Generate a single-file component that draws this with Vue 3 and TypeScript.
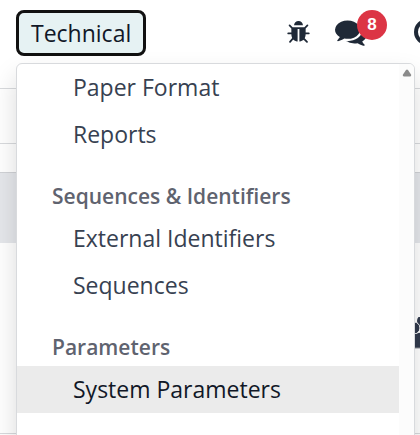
<script setup lang="ts">
interface MenuItem {
  label: string
  active?: boolean
}

interface MenuSection {
  title?: string
  items: MenuItem[]
}

const sections: MenuSection[] = [
  { items: [{ label: 'Paper Format' }, { label: 'Reports' }] },
  {
    title: 'Sequences & Identifiers',
    items: [{ label: 'External Identifiers' }, { label: 'Sequences' }],
  },
  { title: 'Parameters', items: [{ label: 'System Parameters', active: true }] },
]

const messageCount = 8
</script>

<template>
  <div class="page">
    <header class="navbar">
      <div class="menu">
        <button class="menu-toggle" type="button" aria-haspopup="true" aria-expanded="true">Technical</button>
        <nav class="dropdown" aria-label="Technical">
          <div class="dropdown-list">
            <section v-for="(section, index) in sections" :key="index">
              <h2 v-if="section.title" class="section-title">{{ section.title }}</h2>
              <a
                v-for="item in section.items"
                :key="item.label"
                class="item"
                :class="{ active: item.active }"
                href="#"
              >{{ item.label }}</a>
            </section>
          </div>
          <div class="scrollbar">
            <svg width="10" height="8" viewBox="0 0 10 8" aria-hidden="true">
              <path d="M4 1Q5 0 6 1L9 5.500Q9.800 7.500 8 7.500H2Q.200 7.500 1 5.500Z" fill="#8b8b8b" />
            </svg>
          </div>
        </nav>
      </div>
      <div class="systray">
        <button class="icon-button" type="button" aria-label="Debug">
          <svg width="25" height="25" viewBox="0 0 1792 1792" fill="currentColor" aria-hidden="true">
            <path d="M1696 960q0 26-19 45t-45 19h-224q0 171-67 290l208 209q19 19 19 45t-19 45q-18 19-45 19t-45-19l-198-197q-5 5-15 13t-42 28.500-65 36.500-82 29-97 13v-896h-128v896q-51 0-101.500-13.500t-87-33-66-39-43.500-32.500l-15-14-183 207q-20 21-48 21-24 0-43-16-19-18-20.500-44.500t15.500-46.500l202-227q-58-114-58-274h-224q-26 0-45-19t-19-45 19-45 45-19h224v-294l-173-173q-19-19-19-45t19-45 45-19 45 19l173 173h844l173-173q19-19 45-19t45 19 19 45-19 45l-173 173v294h224q26 0 45 19t19 45zm-480-576h-640q0-133 93.500-226.500t226.500-93.500 226.500 93.500 93.500 226.500z" />
          </svg>
        </button>
        <button class="icon-button" type="button" aria-label="Messages">
          <svg width="32" height="32" viewBox="0 0 1792 1792" fill="currentColor" aria-hidden="true">
            <path d="M1408 768q0 139-94 257t-256.500 186.500-353.500 68.500q-86 0-176-16-124 88-278 128-36 9-86 16h-3q-11 0-20.500-8t-11.500-21q-1-3-1-6.500t.500-6.500 2-6l2.500-5 3.500-5.500 4-5 4.500-5 4-4.500q5-6 23-25t26-29.500 22.500-29 25-38.500 20.500-44q-124-72-195-177t-71-224q0-139 94-257t256.500-186.500 353.500-68.500 353.500 68.500 256.500 186.500 94 257zm384 256q0 120-71 224.500t-195 176.500q10 24 20.500 44t25 38.500 22.500 29 26 29.500 23 25q1 1 4 4.500t4.500 5 4 5 3.500 5.500l2.500 5 2 6 .500 6.500-1 6.500q-3 14-13 22t-22 7q-50-7-86-16-154-40-278-128-90 16-176 16-271 0-472-132 58 4 88 4 161 0 309-45t264-129q125-92 192-212t67-254q0-77-23-152 129 71 204 178t75 230z" />
          </svg>
          <span class="badge">{{ messageCount }}</span>
        </button>
        <button class="icon-button clock" type="button" aria-label="Activities">
          <svg width="26" height="26" viewBox="0 0 26 26" fill="none" stroke="currentColor" stroke-width="4" aria-hidden="true">
            <circle cx="13" cy="13" r="11" />
            <path d="M14 7v7H9" stroke-width="2" />
          </svg>
        </button>
      </div>
    </header>
    <div class="control-panel"></div>
    <main class="content">
      <div class="spacer"></div>
      <div class="heading-row"></div>
      <div class="body">
        <svg class="users" width="36" height="32" viewBox="0 0 36 32" aria-hidden="true">
          <g fill="#323b4d">
            <circle cx="8" cy="4" r="6" />
            <path d="M0 31V17Q4 15 10 16Q18 17 18 24V31Z" />
            <circle cx="-1" cy="11" r="6" stroke="#fff" />
            <path d="M-8 31V24Q-8 17 -1 17Q4 17 7 19V31Z" />
          </g>
          <path d="M0 31H36" stroke="#8a8e96" stroke-width="1" />
        </svg>
      </div>
    </main>
  </div>
</template>

<style>
body {
  margin: 0;
}
</style>

<style scoped>
.page {
  display: flex;
  flex-direction: column;
  height: 100vh;
  overflow: hidden;
  background: #fff;
  color: #374151;
  font-family: "Open Sans", "Noto Sans", sans-serif;
  font-size: 23px;
}

.navbar {
  position: relative;
  display: flex;
  justify-content: space-between;
  flex: none;
  box-sizing: border-box;
  height: 89px;
  padding: 10px 0 0 16px;
  border-bottom: 1px solid #d8dadd;
}

.menu-toggle {
  box-sizing: border-box;
  height: 46px;
  padding: 0 12px;
  border: 3px solid #111;
  border-radius: 8px;
  background: #e6f2f3;
  color: #111827;
  font: inherit;
  line-height: 40px;
}

.dropdown {
  position: absolute;
  top: 63px;
  left: 16px;
  right: 5px;
  z-index: 2;
  display: flex;
  box-sizing: border-box;
  height: 400px;
  overflow: hidden;
  border: 1px solid #d8dadd;
  border-radius: 6px;
  background: #fff;
  box-shadow: 0 13px 26px rgba(0, 0, 0, 0.15);
}

.dropdown-list {
  flex: 1;
}

.item {
  display: block;
  padding-left: 56px;
  color: #374151;
  line-height: 47px;
  text-decoration: none;
}

.item.active {
  background: #ebebeb;
  color: #111827;
}

.section-title {
  margin: 0;
  padding: 20px 0 1px 35px;
  color: #5f636f;
  font-size: 21px;
  font-weight: 600;
  line-height: 36px;
}

.scrollbar {
  display: flex;
  justify-content: center;
  flex: none;
  width: 15px;
  padding-top: 5px;
  background: #fcfcfc;
}

.systray {
  display: flex;
  align-items: center;
  align-self: flex-start;
  height: 44px;
  gap: 24px;
  overflow: hidden;
  margin-top: -10px;
  padding-top: 10px;
  color: #1f2937;
}

.icon-button {
  position: relative;
  display: flex;
  padding: 0;
  border: 0;
  background: none;
  color: inherit;
}

.badge {
  position: absolute;
  top: -6px;
  left: 22px;
  width: 30px;
  height: 30px;
  border-radius: 50%;
  background: #dc3545;
  color: #fff;
  font-size: 17px;
  font-weight: 700;
  line-height: 30px;
  text-align: center;
}

.clock {
  width: 6px;
  margin-left: 23px;
  overflow: hidden;
}

.clock svg {
  flex: none;
}

.control-panel {
  flex: none;
  height: 54px;
  border-bottom: 1px solid #d8dadd;
}

.content {
  display: flex;
  flex: 1;
  flex-direction: column;
}

.spacer {
  height: 28px;
  border-bottom: 1px solid #d0d2d6;
}

.heading-row {
  height: 70px;
  background: #e5e7eb;
}

.body {
  display: flex;
  flex: 1;
  justify-content: flex-end;
  margin-bottom: 1px;
  padding-top: 74px;
  border-bottom: 1px solid #d8dadd;
}

.users {
  flex: none;
  margin-right: -31px;
}
</style>
